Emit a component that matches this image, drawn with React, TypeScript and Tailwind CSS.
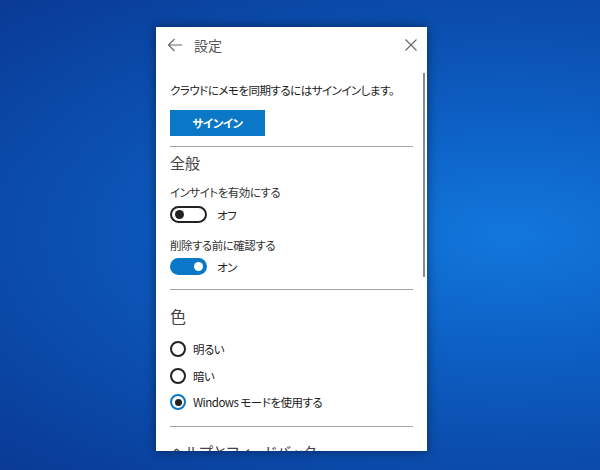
import React from 'react';

const jp = "font-['Noto_Sans_CJK_JP','Noto_Sans',sans-serif] [font-feature-settings:'palt']";
const small = 'text-[11.5px] leading-[16px] tracking-[-0.5px]';

function Toggle({ on }: { on: boolean }) {
  return on ? (
    <div className="flex h-[17px] w-[37px] items-center justify-end rounded-full bg-[#0a78c6] pr-[4px]">
      <div className="h-[9px] w-[9px] rounded-full bg-white" />
    </div>
  ) : (
    <div className="flex h-[17px] w-[37px] items-center rounded-full border-2 border-[#222] pl-[3px]">
      <div className="h-[9px] w-[9px] rounded-full bg-[#222]" />
    </div>
  );
}

function Radio({ label, checked }: { label: string; checked?: boolean }) {
  return (
    <div className="flex h-[26.5px] items-center gap-[7px]">
      {checked ? (
        <div className="flex h-[16px] w-[16px] items-center justify-center rounded-full border-2 border-[#0a78c6]">
          <div className="h-[7px] w-[7px] rounded-full bg-[#222]" />
        </div>
      ) : (
        <div className="h-[16px] w-[16px] rounded-full border-2 border-[#222]" />
      )}
      <span className={`${small} text-[#222]`}>{label}</span>
    </div>
  );
}

export default function App() {
  return (
    <div
      className={`h-[470px] w-[600px] overflow-hidden bg-[radial-gradient(ellipse_at_85%_50%,#1277dc_0%,#0c5cc0_40%,#0a429f_85%,#093a95_100%)] pl-[156px] pt-[27px] ${jp}`}
    >
      <div className="flex h-[424px] w-[271px] flex-col overflow-hidden bg-white shadow-[0_0_10px_rgba(0,0,0,0.45)]">
        <div className="flex h-[35px] shrink-0 items-center pl-[11px] pr-[10px]">
          <svg width="16" height="14" viewBox="0 0 16 14" fill="none" stroke="#666" strokeWidth="1.1">
            <path d="M15 7H1.5M7.5 1L1.5 7l6 6" />
          </svg>
          <span className="ml-[11px] text-[14px] leading-[20px] text-[#555]">設定</span>
          <svg className="ml-auto" width="12" height="12" viewBox="0 0 12 12" fill="none" stroke="#666" strokeWidth="1.1">
            <path d="M0.5 0.5l11 11M11.5 0.5l-11 11" />
          </svg>
        </div>

        <div className="flex min-h-0 flex-1">
          <div className="w-[257px] shrink-0 pl-[14px]">
            <p className={`mt-[20px] whitespace-nowrap text-[#222] ${small}`}>
              クラウドにメモを同期するにはサインインします。
            </p>
            <button className={`mt-[12px] flex h-[26px] w-[95px] items-center justify-center bg-[#0a78c6] font-bold text-white ${small}`}>
              サインイン
            </button>
            <div className="mt-[10px] h-px w-[243px] bg-[#a3a3a3]" />

            <h2 className="mt-[5px] text-[15px] leading-[22px] text-[#444]">全般</h2>
            <p className={`mt-[10px] text-[#333] ${small}`}>インサイトを有効にする</p>
            <div className="mt-[6px] flex items-center gap-[10px]">
              <Toggle on={false} />
              <span className={`text-[#222] ${small}`}>オフ</span>
            </div>
            <p className={`mt-[14px] text-[#333] ${small}`}>削除する前に確認する</p>
            <div className="mt-[5px] flex items-center gap-[10px]">
              <Toggle on />
              <span className={`text-[#222] ${small}`}>オン</span>
            </div>
            <div className="mt-[14px] h-px w-[243px] bg-[#a3a3a3]" />

            <h2 className="mt-[15px] text-[16px] leading-[22px] text-[#444]">色</h2>
            <div className="mt-[9px] flex flex-col">
              <Radio label="明るい" />
              <Radio label="暗い" />
              <Radio label="Windows モードを使用する" checked />
            </div>
            <div className="mt-[10px] h-px w-[243px] bg-[#a3a3a3]" />
            <h2 className="mt-[14px] text-[15px] leading-[22px] text-[#444]">ヘルプとフィードバック</h2>
          </div>
          <div className="ml-[10px] pt-[11px]">
            <div className="h-[204px] w-[2px] bg-[#8a8a8a]" />
          </div>
        </div>
      </div>
    </div>
  );
}
